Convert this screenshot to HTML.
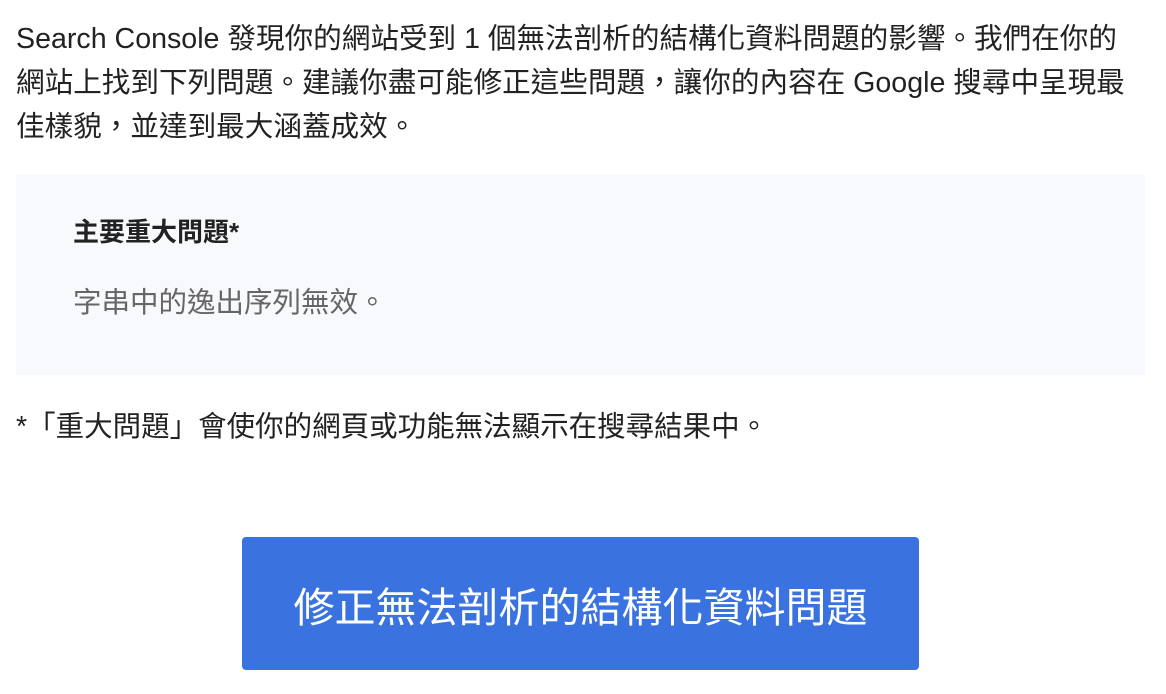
<!DOCTYPE html>
<html><head><meta charset="utf-8"><style>
body{margin:0;background:#fff;width:1166px;height:694px;overflow:hidden;font-family:"Liberation Sans","Noto Sans CJK TC",sans-serif;color:#222}
.p{position:absolute;left:16px;top:17px;font-size:28.6px;line-height:44px;white-space:nowrap}
.box{position:absolute;left:16px;top:174px;width:1129px;height:201px;background:#f8f9fd}
.h{position:absolute;left:57px;top:38px;font-size:26px;font-weight:bold;color:#222}
.s{position:absolute;left:57px;top:106px;font-size:28.5px;color:#666}
.f{position:absolute;left:16px;top:404px;font-size:28.5px;white-space:nowrap}
.btn{position:absolute;left:242px;top:537px;width:677px;height:133px;background:#3a73e0;border-radius:4px;color:#fff;font-size:41px;display:flex;align-items:center;justify-content:center}
</style></head><body>
<div class="p">Search Console 發現你的網站受到 1 個無法剖析的結構化資料問題的影響。我們在你的<br>網站上找到下列問題。建議你盡可能修正這些問題，讓你的內容在 Google 搜尋中呈現最<br>佳樣貌，並達到最大涵蓋成效。</div>
<div class="box"><div class="h">主要重大問題*</div><div class="s">字串中的逸出序列無效。</div></div>
<div class="f">*「重大問題」會使你的網頁或功能無法顯示在搜尋結果中。</div>
<div class="btn">修正無法剖析的結構化資料問題</div>
</body></html>
